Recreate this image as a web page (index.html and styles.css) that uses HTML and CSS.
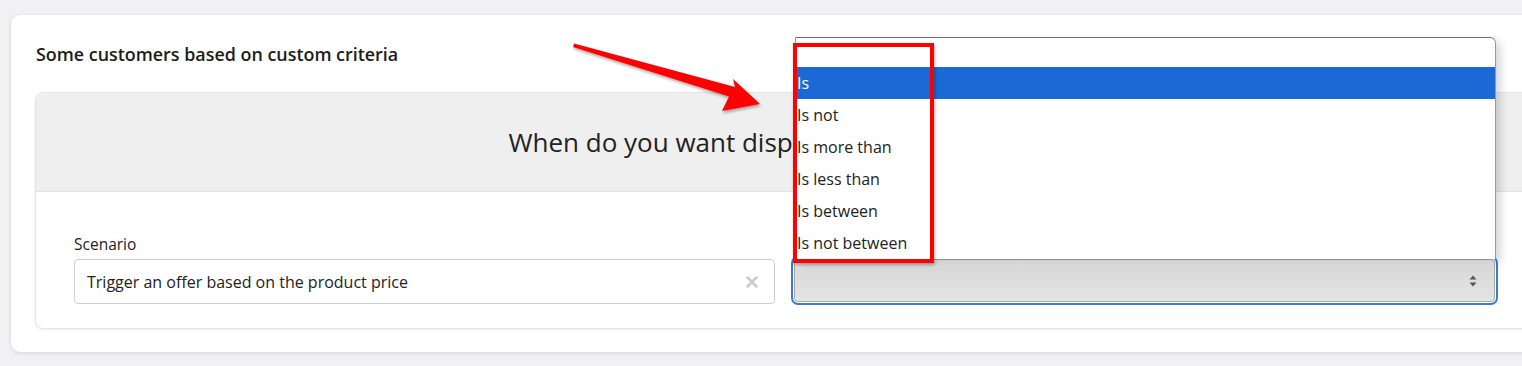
FILE: index.html
```html
<!DOCTYPE html>
<html lang="en">
<head>
    <meta charset="UTF-8">
    <meta name="viewport" content="width=device-width, initial-scale=1.0">
    <title>Offer conditions</title>
    <link rel="stylesheet" href="styles.css">
</head>
<body>
    <div class="page">
        <div class="card">
            <h2 class="card-title">Some customers based on custom criteria</h2>

            <div class="rule-box">
                <div class="rule-head">
                    <h3>When do you want display the discount offer?</h3>
                </div>
                <div class="rule-body">
                    <div class="field">
                        <label>Scenario</label>
                        <div class="input">
                            <span>Trigger an offer based on the product price</span>
                            <svg class="clear" width="12" height="12" viewBox="0 0 12 12">
                                <path d="M1.5 1.5 L10.5 10.5 M10.5 1.5 L1.5 10.5" stroke="#cccccc" stroke-width="2.6" stroke-linecap="round"/>
                            </svg>
                        </div>
                    </div>
                    <div class="field">
                        <label>&nbsp;</label>
                        <div class="select">
                            <svg class="updown" width="8" height="12" viewBox="0 0 8 12">
                                <path d="M4 0.5 L7.5 4.5 L0.5 4.5 Z M4 11.5 L7.5 7.5 L0.5 7.5 Z" fill="#555"/>
                            </svg>
                        </div>

                        <!-- open native list of the select -->
                        <ul class="options">
                            <li>&nbsp;</li>
                            <li class="active">Is</li>
                            <li>Is not</li>
                            <li>Is more than</li>
                            <li>Is less than</li>
                            <li>Is between</li>
                            <li>Is not between</li>
                        </ul>
                        <div class="mark"></div>
                    </div>
                </div>
            </div>
        </div>
    </div>

    <!-- annotation arrow -->
    <svg class="arrow" width="220" height="90" viewBox="560 30 220 90">
        <defs>
            <filter id="sh" x="-10%" y="-20%" width="130%" height="160%">
                <feDropShadow dx="1" dy="2" stdDeviation="1.5" flood-color="#000" flood-opacity="0.35"/>
            </filter>
        </defs>
        <polygon points="574,43.5 735,87 733,79 760,104 722,111 729,96.5 573,47" fill="#ff0000" filter="url(#sh)"/>
    </svg>
</body>
</html>
```

FILE: styles.css
```css
html, body {
    overflow: hidden;
}
body {
    margin: 0;
    background-color: #f1f1f3;
    font-family: "Open Sans", "Noto Sans", sans-serif;
    color: #222;
}
.page {
    width: 1547px;
    padding: 15px 0 14px 11px;
}
.card {
    background-color: #fff;
    border-radius: 9px;
    box-shadow: 0 1px 4px rgba(0,0,0,0.12);
    padding: 27px 24px 23px 24px;
}
.card-title {
    margin: 0 0 26px 1px;
    font-size: 17.9px;
    font-weight: 600;
    line-height: 24px;
    color: #1c1c1c;
}
.rule-box {
    border: 1px solid #e4e4e4;
    border-radius: 8px;
    box-shadow: 0 1px 3px rgba(0,0,0,0.08);
}
.rule-head {
    background-color: #efefef;
    border-bottom: 1px solid #e2e2e2;
    border-radius: 8px 8px 0 0;
    height: 98px;
    display: flex;
    align-items: center;
    justify-content: center;
}
.rule-head h3 {
    margin: 0;
    font-size: 26px;
    font-weight: 400;
    color: #222;
}
.rule-body {
    display: grid;
    grid-template-columns: 1fr 1fr;
    gap: 19px;
    padding: 41px 38px 24px 38px;
}
.field {
    position: relative;
}
.field label {
    display: block;
    font-size: 15.5px;
    line-height: 22px;
    margin-bottom: 4px;
    color: #222;
}
.input {
    height: 43px;
    border: 1px solid #cfcfcf;
    border-radius: 4px;
    display: flex;
    align-items: center;
    justify-content: space-between;
    padding: 0 16px 0 12px;
    font-size: 16px;
}
.clear {
    display: block;
}
.select {
    height: 41px;
    border: 1px solid #a9a9a9;
    border-radius: 4px;
    outline: 2px solid #3b7bd6;
    outline-offset: 1px;
    background: linear-gradient(to bottom, #f0f0f0 0%, #dadada 25%, #e4e4e4 100%);
    display: flex;
    align-items: center;
    justify-content: flex-end;
    padding-right: 17px;
}
.updown {
    display: block;
}
.options {
    position: absolute;
    left: 1px;
    top: -196px;
    width: 699px;
    margin: 0;
    padding: 0;
    list-style: none;
    background-color: #fff;
    border: 1px solid #9a9a9a;
    border-top-color: #707070;
    border-bottom: none;
    border-radius: 0 6px 0 0;
    box-shadow: 4px 4px 10px rgba(0,0,0,0.18);
    font-size: 16px;
}
.options li {
    height: 32px;
    line-height: 32px;
    padding-left: 1px;
    color: #222;
}
.options li:first-child {
    height: 29px;
}
.options li.active {
    background-color: #1a69d4;
    color: #fff;
}
.mark {
    position: absolute;
    left: -1px;
    top: -190px;
    width: 133px;
    height: 212px;
    border: 4px solid #ff0000;
    box-shadow: 1px 2px 3px rgba(0,0,0,0.3);
}
.arrow {
    position: absolute;
    left: 560px;
    top: 30px;
}
```
